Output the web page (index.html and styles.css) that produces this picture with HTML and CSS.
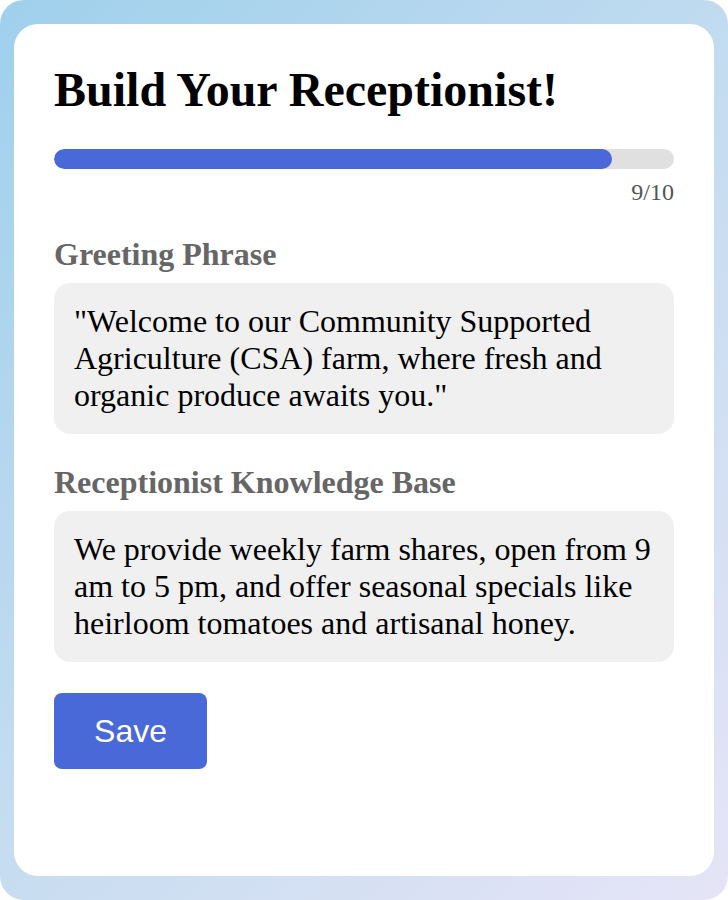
FILE: index.html
```html
<!DOCTYPE HTML>
<html>
    <head>
        <meta charset='utf-8'/>
        <link rel="stylesheet" href="styles.css">
    </head>
    <body>
        <div class="wrap">
            <div class="card">
                <h1 class="title">Build Your Receptionist!</h1>
                <div class="progress">
                    <div class="progress-fill" style="width: 90%"></div>
                </div>
                <div class="step">9/10</div>

                <div class="field">
                    <div class="label">Greeting Phrase</div>
                    <div class="box">"Welcome to our Community Supported Agriculture (CSA) farm, where fresh and organic produce awaits you."</div>
                </div>

                <div class="field">
                    <div class="label">Receptionist Knowledge Base</div>
                    <div class="box">We provide weekly farm shares, open from 9 am to 5 pm, and offer seasonal specials like heirloom tomatoes and artisanal honey.</div>
                </div>

                <button class="save">Save</button>
            </div>
        </div>
    </body>
</html>
```

FILE: styles.css
```css
html, body{
    margin: 0;
    padding: 0;
}
body{
    font-family: "Liberation Serif", "Times New Roman", serif;
}
.wrap{
    width: 728px;
    height: 900px;
    box-sizing: border-box;
    padding: 24px 14px;
    border-radius: 24px;
    background: linear-gradient(135deg, #9fd0ec 0%, #c4dcf0 50%, #e6e4f7 100%);
}
.card{
    background: #fff;
    border-radius: 24px;
    height: 100%;
    box-sizing: border-box;
    padding: 38px 40px;
}
.title{
    margin: 0;
    font-size: 48px;
    font-weight: bold;
    color: #000;
}
.progress{
    margin-top: 32px;
    height: 20px;
    border-radius: 10px;
    background: #e0e0e0;
    overflow: hidden;
}
.progress-fill{
    height: 100%;
    border-radius: 10px;
    background: #4a69d8;
}
.step{
    text-align: right;
    font-size: 24px;
    color: #555;
    margin-top: 10px;
}
.field{
    margin-top: 30px;
}
.label{
    font-size: 32px;
    font-weight: bold;
    color: #666;
}
.box{
    margin-top: 10px;
    background: #f0f0f0;
    border-radius: 16px;
    padding: 20px;
    font-size: 32px;
    color: #000;
}
.save{
    display: block;
    margin-top: 31px;
    width: 153px;
    height: 76px;
    border: none;
    border-radius: 8px;
    background: #4a69d8;
    color: #fff;
    font-family: "Liberation Sans", Arial, sans-serif;
    font-size: 32px;
    cursor: pointer;
}
```
